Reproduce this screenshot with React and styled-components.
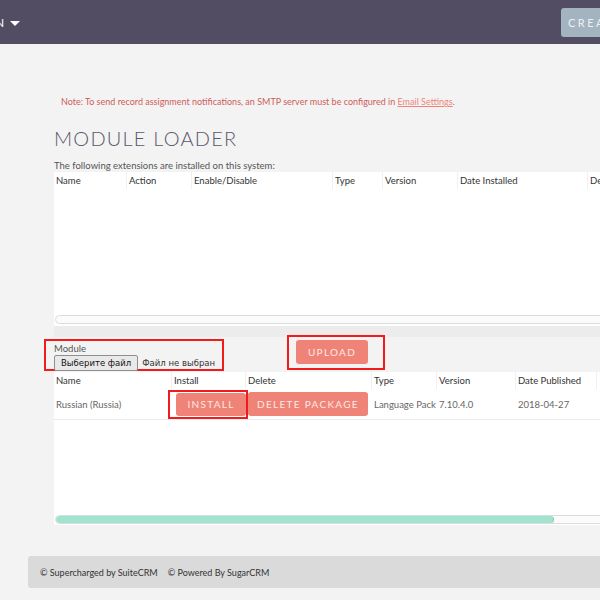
import React from "react";
import styled, { createGlobalStyle } from "styled-components";

const Global = createGlobalStyle`
  html, body {
    margin: 0;
    padding: 0;
    background: #f3f3f3;
    overflow: hidden;
    width: 600px;
    height: 600px;
  }
  body {
    font-family: Lato, "Open Sans", sans-serif;
  }
`;

const Page = styled.div`
  width: 600px;
  height: 600px;
  overflow: hidden;
  position: relative;
`;

const Nav = styled.nav`
  height: 44px;
  background: #534d64;
  display: flex;
  align-items: center;
  justify-content: space-between;
`;

const NavMenu = styled.div`
  display: flex;
  align-items: center;
  margin-left: -5px;
  color: #fff;
  font-size: 12px;
  letter-spacing: 1px;
`;

const Caret = styled.span`
  display: inline-block;
  margin-left: 5px;
  margin-top: 2px;
  width: 0;
  height: 0;
  border-left: 5px solid transparent;
  border-right: 5px solid transparent;
  border-top: 5px solid #fff;
`;

const CreateButton = styled.div`
  width: 80px;
  height: 29px;
  margin-top: 1px;
  margin-right: -41px;
  background: #a3b3c0;
  border-radius: 3px;
  color: #eef1f4;
  font-size: 11px;
  letter-spacing: 2.5px;
  display: flex;
  align-items: center;
  padding-left: 7px;
  box-sizing: border-box;
`;

const Main = styled.div`
  padding-left: 54px;
  width: 620px;
`;

const Note = styled.div`
  margin-top: 52px;
  padding-left: 7px;
  color: #cf5c5a;
  font-size: 9px;
  white-space: nowrap;
  a {
    color: #f08377;
    text-decoration: underline;
  }
`;

const Title = styled.h2`
  margin: 19px 0 0;
  font-size: 20px;
  font-weight: 300;
  letter-spacing: 1.2px;
  color: #5b566a;
  line-height: 24px;
`;

const Sub = styled.div`
  margin-top: 10px;
  font-size: 9.5px;
  color: #555;
  line-height: 12px;
`;

const Panel = styled.div`
  background: #fff;
  height: ${p => p.h}px;
  display: flex;
  flex-direction: column;
`;

const Row = styled.div`
  display: grid;
  grid-template-columns: ${p => p.cols};
  height: ${p => p.h}px;
  align-items: center;
  border-bottom: ${p => (p.line ? "1px solid #ececec" : "none")};
`;

const Head = styled.div`
  height: 100%;
  display: flex;
  align-items: center;
  padding-left: 2px;
  font-size: 9.5px;
  color: #333;
  white-space: nowrap;
  border-right: 1px solid #f0f0f0;
  overflow: hidden;
`;

const Cell = styled.div`
  font-size: 9.5px;
  color: #666;
  padding-left: 2px;
  white-space: nowrap;
  display: flex;
  align-items: center;
`;

const Spacer = styled.div`
  flex: 1;
`;

const Scroll = styled.div`
  height: 7px;
  margin: 0 0 ${p => p.mb}px 1px;
  border: 1px solid #dcdcdc;
  border-radius: 5px;
  background: #fbfbfb;
  position: relative;
  overflow: hidden;
`;

const Thumb = styled.div`
  position: absolute;
  left: 0;
  top: 0;
  bottom: 0;
  border-radius: 5px;
  background: #a1e3cf;
  border-right: 1px solid #86cdb8;
`;

const Strip = styled.div`
  height: 11px;
  background: #ececec;
`;

const ModuleBar = styled.div`
  display: flex;
  align-items: flex-start;
  height: 35px;
`;

const RedBox = styled.div`
  border: 2px solid #f21b1b;
  box-sizing: border-box;
`;

const ModuleBox = styled(RedBox)`
  margin: 2px 0 0 -10px;
  width: 180px;
  height: 32px;
  padding: 2px 0 0 8px;
`;

const Label = styled.div`
  font-size: 9.5px;
  color: #555;
  line-height: 11px;
`;

const FileRow = styled.div`
  display: flex;
  align-items: center;
  gap: 4px;
  margin-top: 1px;
`;

const FileButton = styled.span`
  display: inline-block;
  background: #e9e9e9;
  border: 1px solid #8f8f8f;
  border-radius: 2px;
  font-family: "DejaVu Sans", sans-serif;
  font-size: 8.5px;
  color: #111;
  padding: 1px 6px;
  line-height: 12px;
`;

const FileText = styled.span`
  font-family: "DejaVu Sans", sans-serif;
  font-size: 8.5px;
  color: #333;
`;

const UploadBox = styled(RedBox)`
  margin-left: 63px;
  margin-top: -2px;
  width: 98px;
  height: 35px;
  padding: 3px 0 0 7px;
`;

const Button = styled.div`
  background: #f08377;
  color: #fde9e6;
  border-radius: 3px;
  font-size: 10px;
  letter-spacing: 1.3px;
  height: ${p => p.h || 24}px;
  width: ${p => p.w}px;
  display: flex;
  align-items: center;
  justify-content: center;
  box-sizing: border-box;
  white-space: nowrap;
`;

const InstallBox = styled(RedBox)`
  margin-left: -6px;
  width: 81px;
  height: 29px;
  padding: 1px 0 0 6px;
`;

const Footer = styled.div`
  margin: 31px 0 0 28px;
  height: 32px;
  width: 600px;
  background: #dadada;
  border-radius: 3px;
  display: flex;
  align-items: center;
  padding-left: 12px;
  gap: 10px;
  font-size: 9px;
  color: #333;
`;

const topCols = "73px 65px 141px 50px 75px 130px 90px";
const botCols = "118px 74px 126px 65px 79px 81px 40px";

export default function App() {
  return (
    <Page>
      <Global />
      <Nav>
        <NavMenu>
          N<Caret />
        </NavMenu>
        <CreateButton>CREATE</CreateButton>
      </Nav>
      <Main>
        <Note>
          Note: To send record assignment notifications, an SMTP server must be configured in{" "}
          <a>Email Settings</a>.
        </Note>
        <Title>MODULE LOADER</Title>
        <Sub>The following extensions are installed on this system:</Sub>
        <Panel h={154}>
          <Row cols={topCols} h={17}>
            <Head>Name</Head>
            <Head>Action</Head>
            <Head>Enable/Disable</Head>
            <Head>Type</Head>
            <Head>Version</Head>
            <Head>Date Installed</Head>
            <Head>Description</Head>
          </Row>
          <Spacer />
          <Scroll mb={2} />
        </Panel>
        <Strip />
        <ModuleBar>
          <ModuleBox>
            <Label>Module</Label>
            <FileRow>
              <FileButton>Выберите файл</FileButton>
              <FileText>Файл не выбран</FileText>
            </FileRow>
          </ModuleBox>
          <UploadBox>
            <Button w={72}>UPLOAD</Button>
          </UploadBox>
        </ModuleBar>
        <Panel h={153}>
          <Row cols={botCols} h={17}>
            <Head>Name</Head>
            <Head>Install</Head>
            <Head>Delete</Head>
            <Head>Type</Head>
            <Head>Version</Head>
            <Head>Date Published</Head>
            <Head />
          </Row>
          <Row cols={botCols} h={30} line>
            <Cell>Russian (Russia)</Cell>
            <Cell>
              <InstallBox>
                <Button w={70} h={23}>INSTALL</Button>
              </InstallBox>
            </Cell>
            <Cell>
              <Button w={120} h={24}>DELETE PACKAGE</Button>
            </Cell>
            <Cell>Language Pack</Cell>
            <Cell>7.10.4.0</Cell>
            <Cell>2018-04-27</Cell>
            <Cell />
          </Row>
          <Spacer />
          <Scroll mb={1}>
            <Thumb style={{ width: "497px" }} />
          </Scroll>
        </Panel>
      </Main>
      <Footer>
        <span>© Supercharged by SuiteCRM</span>
        <span>© Powered By SugarCRM</span>
      </Footer>
    </Page>
  );
}
